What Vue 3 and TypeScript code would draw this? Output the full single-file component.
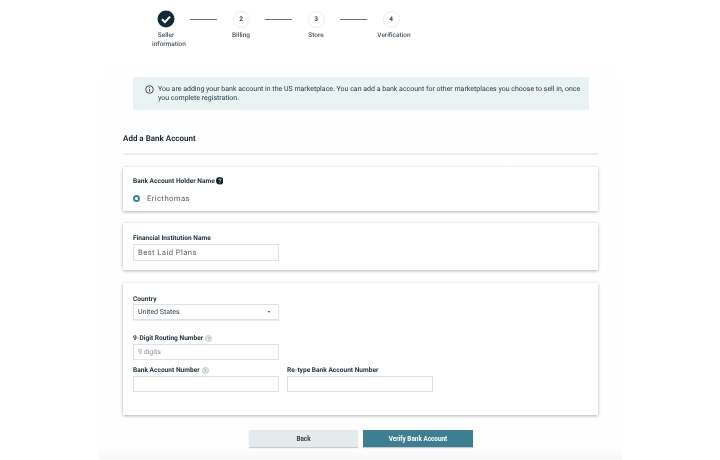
<script setup lang="ts">
interface Step { label: string; num?: string; done?: boolean }
const steps: Step[] = [
  { label: 'Seller information', done: true },
  { label: 'Billing', num: '2' },
  { label: 'Store', num: '3' },
  { label: 'Verification', num: '4' },
]
</script>

<template>
  <div class="page">
    <main class="main">
      <nav class="stepper">
        <template v-for="(s, i) in steps" :key="s.label">
          <div class="line" v-if="i > 0"></div>
          <div class="step">
            <div v-if="s.done" class="check">
              <svg width="18" height="18" viewBox="0 0 18 18"><circle cx="9" cy="9" r="8.5" fill="#122b3a"/><path d="M5 9.3l2.9 2.8L13 6.6" fill="none" stroke="#fff" stroke-width="2"/></svg>
            </div>
            <div v-else class="num">{{ s.num }}</div>
            <div class="step-label">{{ s.label }}</div>
          </div>
        </template>
      </nav>

      <div class="alert">
        <svg class="alert-icon" width="9" height="9" viewBox="0 0 9 9"><circle cx="4.5" cy="4.5" r="3.8" fill="none" stroke="#2f3d42" stroke-width="0.9"/><path d="M4.5 4v2.6M4.5 2.2v1" stroke="#2f3d42" stroke-width="0.9"/></svg>
        <p>You are adding your bank account in the US marketplace. You can add a bank account for other marketplaces you choose to sell in, once you complete registration.</p>
      </div>

      <h2 class="title">Add a Bank Account</h2>

      <section class="card card-a">
        <div class="label">Bank Account Holder Name
          <svg class="q" width="8" height="8" viewBox="0 0 8 8"><circle cx="4" cy="4" r="4" fill="#10222e"/><path d="M2.8 3.1c0-1.5 2.5-1.5 2.5 0 0 .9-1.3.9-1.3 1.8M4 5.6v1" fill="none" stroke="#fff" stroke-width="0.8"/></svg>
        </div>
        <div class="radio-row"><span class="radio"></span><span class="value">Ericthomas</span></div>
      </section>

      <section class="card card-b">
        <div class="label">Financial Institution Name</div>
        <div class="input value-input">Best Laid Plans</div>
      </section>

      <section class="card card-c">
        <div class="label">Country</div>
        <div class="input select"><span>United States</span><i class="caret"></i></div>
        <div class="label routing">9-Digit Routing Number <span class="hint">?</span></div>
        <div class="input placeholder">9 digits</div>
        <div class="row">
          <div class="col">
            <div class="label">Bank Account Number <span class="hint">?</span></div>
            <div class="input"></div>
          </div>
          <div class="col">
            <div class="label">Re-type Bank Account Number</div>
            <div class="input"></div>
          </div>
        </div>
      </section>

      <div class="actions">
        <button class="btn back">Back</button>
        <button class="btn verify">Verify Bank Account</button>
      </div>
    </main>
  </div>
</template>

<style>
html, body { margin: 0; background: #fff; }
</style>

<style scoped>
.page {
  width: 720px;
  height: 460px;
  overflow: hidden;
  background: #fff;
  font-family: "Roboto", "Open Sans", sans-serif;
  text-rendering: geometricPrecision;
  color: #26343c;
  filter: blur(0.35px);
}
.main {
  box-sizing: border-box;
  width: 523px;
  height: 460px;
  margin-left: 99px;
  padding: 0 24px;
  background: linear-gradient(to bottom, #fff 0, #fefefe 446px, #f7f7f7 460px);
}
.stepper {
  height: 77px;
  box-sizing: border-box;
  padding: 10px 0 0 19px;
  display: flex;
  align-items: flex-start;
}
.step {
  width: 48px;
  flex: none;
  display: flex;
  flex-direction: column;
  align-items: center;
}
.check { height: 18px; }
.check svg { display: block; }
.num {
  box-sizing: border-box;
  width: 17px;
  height: 17px;
  margin-top: 1px;
  border: 1px solid #eceeee;
  border-radius: 50%;
  font-size: 6.5px;
  font-weight: 700;
  line-height: 15px;
  text-align: center;
  color: #33444c;
}
.step-label {
  margin-top: 3px;
  font-size: 6.5px;
  font-weight: 500;
  line-height: 9.2px;
  text-align: center;
  color: #4a5a62;
}
.step:first-child .step-label { margin-left: 6px; text-indent: -6px; }
.step:last-child .step-label { margin-left: 6px; white-space: nowrap; }
.line {
  flex: none;
  width: 27px;
  height: 1.4px;
  margin-top: 9px;
  background: #64757c;
}
.alert {
  box-sizing: border-box;
  height: 33px;
  margin: 0 9px 0 10px;
  padding: 8px 4px 0 12px;
  display: flex;
  gap: 4px;
  background: #e9f3f4;
}
.alert-icon { flex: none; }
.alert p {
  margin: 0;
  font-size: 7px;
  line-height: 9.4px;
  color: #2b3a42;
}
.title {
  margin: 23px 0 0;
  padding-bottom: 9px;
  border-bottom: 2px solid #eeeeee;
  font-size: 8px;
  font-weight: 700;
  line-height: 11px;
  color: #1e2d35;
}
.card {
  box-sizing: border-box;
  padding-left: 10px;
  padding-right: 10px;
  background: #fff;
  box-shadow: 0 1px 3px rgba(0, 0, 0, 0.28), 0 0 4px rgba(0, 0, 0, 0.04);
}
.card-a { height: 44px; margin-top: 12px; padding-top: 8.5px; }
.card-b { height: 47px; margin-top: 12px; padding-top: 10px; }
.card-c { height: 132px; margin-top: 13px; padding-top: 11px; }
.label {
  box-sizing: border-box;
  height: 10px;
  display: flex;
  align-items: center;
  gap: 2px;
  font-size: 6.6px;
  font-weight: 700;
  line-height: 10px;
  white-space: nowrap;
  color: #24353d;
}
.card-a .label { padding-top: 1px; }
.q { width: 7.5px; height: 7.5px; margin-left: -1px; }
.hint {
  box-sizing: border-box;
  display: inline-block;
  width: 7px;
  height: 7px;
  border: 1px solid #c4c9cb;
  border-radius: 50%;
  background: #e4e7e8;
  font-size: 4px;
  line-height: 5px;
  text-align: center;
  color: #9aa2a6;
}
.radio-row {
  display: flex;
  align-items: center;
  gap: 7px;
  height: 12px;
  margin-top: 6.5px;
}
.radio {
  box-sizing: border-box;
  width: 7px;
  height: 7px;
  border: 2px solid #3e8396;
  border-radius: 50%;
  background: #fff;
}
.value {
  margin-top: 1px;
  font-size: 7.7px;
  letter-spacing: 0.4px;
  color: #555f64;
}
.input {
  box-sizing: border-box;
  width: 146px;
  height: 15.5px;
  border: 1px solid #dfe2e3;
  background: #fff;
  padding: 0 4px;
  font-size: 7px;
  line-height: 15px;
}
.value-input {
  height: 17px;
  margin-top: 1px;
  font-size: 7.7px;
  line-height: 15px;
  letter-spacing: 0.4px;
  color: #555f64;
}
.select {
  height: 16px;
  display: flex;
  align-items: center;
  justify-content: space-between;
  padding-right: 8px;
  box-shadow: 0 1px 1px rgba(0, 0, 0, 0.08);
  color: #33444c;
}
.select span { padding-top: 1px; }
.caret {
  width: 0;
  height: 0;
  border-left: 1.5px solid transparent;
  border-right: 1.5px solid transparent;
  border-top: 2px solid #33444c;
}
.routing { margin-top: 13px; }
.routing + .input { margin-top: 1px; }
.placeholder { color: #8b9499; }
.row {
  display: flex;
  gap: 8px;
  margin-top: 5.5px;
}
.col .input { margin-top: 1px; }
.actions {
  display: flex;
  gap: 5px;
  margin: 15px 0 0 126px;
}
.btn {
  height: 17px;
  width: 109px;
  padding: 0;
  border: 0;
  font: 700 6.4px "Roboto", "Open Sans", sans-serif;
  box-shadow: 0 1px 1px rgba(0, 0, 0, 0.2);
}
.back { background: #e4ebec; color: #33444c; }
.verify { width: 110px; background: #3d7f91; color: #fff; }
</style>
